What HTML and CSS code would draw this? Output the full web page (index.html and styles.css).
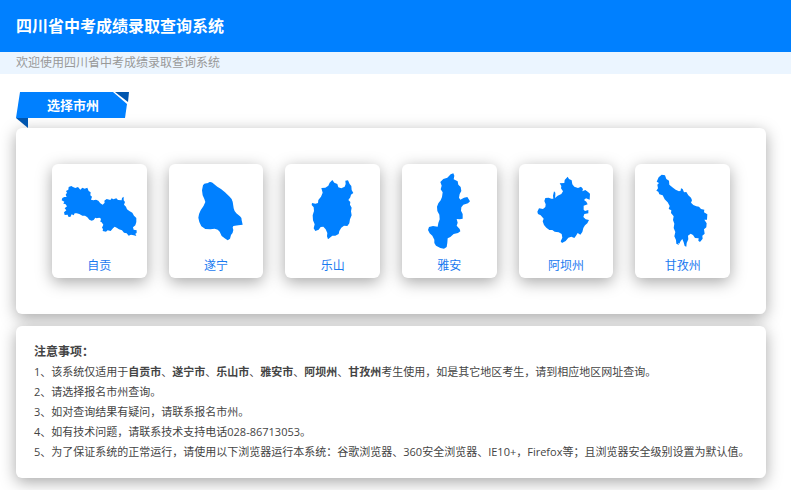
FILE: index.html
```
<!DOCTYPE html>
<html lang="zh-CN">
<head>
<meta charset="utf-8">
<meta name="viewport" content="width=device-width, initial-scale=1">
<title>四川省中考成绩录取查询系统</title>
<link rel="stylesheet" href="styles.css">
</head>
<body>
<header class="site-header">
  <h1 class="site-title">四川省中考成绩录取查询系统</h1>
</header>
<p class="welcome">欢迎使用四川省中考成绩录取查询系统</p>
<main class="content">
  <div class="ribbon">
    <svg class="ribbon-shape" viewBox="0 0 114 36" aria-hidden="true">
      <path fill="#0080ff" d="M4 0H97L111 12L109 26H0Z"/>
      <path fill="#0055ae" d="M99 0H113L112 10Z"/>
      <path fill="#0055ae" d="M0 26H12V36Z"/>
    </svg>
    <h2 class="ribbon-title">选择市州</h2>
  </div>
  <nav class="panel cities" aria-label="选择市州">
    <a class="city" href="#zigong">
      <svg class="city-map" viewBox="6 12 284 276" aria-hidden="true"><path d="M56 81L64 78L69 81L76 84L84 81L91 89L97 83L104 86L112 83L116 93L122 97L121 106L126 110L123 119L130 121L138 119L145 122L151 130L158 134L164 128L163 122L170 117L181 120L185 115L190 118L199 115L204 120L215 121L216 114L221 110L221 121L225 126L222 134L228 140L231 148L238 153L247 158L252 167L259 174L259 186L256 196L249 202L251 209L260 211L260 219L256 221L259 228L251 226L243 224L236 227L230 220L222 218L216 211L207 208L200 203L194 200L189 205L182 213L173 211L168 215L158 213L159 207L156 203L160 194L155 187L151 185L153 176L148 173L140 175L136 173L131 180L125 182L118 179L112 172L105 167L97 167L88 162L80 160L74 160L71 166L65 163L61 171L55 170L53 164L44 165L42 157L49 151L44 145L51 139L46 132L40 131L43 125L35 121L37 114L43 111L50 111L47 104L51 98L48 93L55 89Z"/></svg>
      <span class="city-name">自贡</span>
    </a>
    <a class="city" href="#suining">
      <svg class="city-map" viewBox="8 12 284 276" aria-hidden="true"><path d="M110 76Q113 69 123 70L130 66Q137 65 142 71L153 80L164 87L176 97L190 110Q198 117 199 125L202 145Q204 155 210 160L221 169Q227 174 226 181L229 194L216 196L201 198Q197 201 201 210Q200 220 194 225L191 236L184 241L175 235L166 228L160 215Q156 207 145 206L132 208L117 207L105 199Q98 188 96 173Q97 162 103 151Q113 138 117 126Q114 116 109 106L107 91Z"/></svg>
      <span class="city-name">遂宁</span>
    </a>
    <a class="city" href="#leshan">
      <svg class="city-map" viewBox="7 12 284 276" aria-hidden="true"><path d="M116 84L128 83L137 77L141 68L149 60L155 68L164 72L167 82L176 85L186 80L189 72L188 62L196 61L201 72L206 78L207 90L212 99L205 104L203 112L197 120L203 126L202 134L207 143L205 154L207 166L202 178L200 190L194 198L184 197L176 203L170 213L168 222L158 227L149 227L136 238L133 229L134 219L129 208L122 200L114 201L108 209L98 213L93 205L96 193L91 181L90 166L94 153L93 142L87 135L88 129L98 131L106 129L107 120L115 110L120 98Z"/></svg>
      <span class="city-name">乐山</span>
    </a>
    <a class="city" href="#yaan">
      <svg class="city-map" viewBox="6 12 284 276" aria-hidden="true"><path d="M121 66L130 57L142 53L152 43L160 40L163 47L161 58L173 64L175 74L182 81L184 93L179 102L177 113L181 119L192 113L202 111L210 124L204 130L190 134L184 142L183 152L188 162L188 176L179 178L170 177L173 188L170 197L179 207L181 214L174 219L161 222L151 231L143 235L142 248L140 261L132 266L121 264L108 257L103 249L103 239L97 227L89 220L84 210L87 201L99 198L113 200L115 189L119 178L118 164L112 153L111 140L115 130L122 121L126 111L128 97L122 88L125 77Z"/></svg>
      <span class="city-name">雅安</span>
    </a>
    <a class="city" href="#aba">
      <svg class="city-map" viewBox="8 12 284 276" aria-hidden="true"><path d="M130 70L144 69L145 60L154 50L158 57L166 61L168 73L174 80L185 84L194 80L200 87L198 94L207 90L216 97L221 101L220 119L209 115L203 120L210 125L214 133L202 137L202 149L206 153L216 150L216 160L204 162L201 171L208 178L218 180L213 190L206 196L201 204L198 216L192 224L184 219L179 227L174 234L165 230L156 233L148 243L137 249L133 244L138 233L136 222L127 217L115 215L108 210L99 210L90 203L83 195L79 184L82 176L73 166L65 162L63 155L68 145L80 147L87 141L88 133L84 123L87 114L97 113L105 116L111 116L110 107L113 94L117 98L117 106L116 114L124 107L135 102L140 94L134 85L135 78Z"/></svg>
      <span class="city-name">阿坝州</span>
    </a>
    <a class="city" href="#ganzi">
      <svg class="city-map" viewBox="7 12 284 276" aria-hidden="true"><path d="M78 52L87 44L97 46L101 57L109 62L110 74L119 82L129 89L139 94L144 92L145 85L150 87L154 97L161 96L167 106L175 113L178 121L175 128L182 135L191 139L199 140L205 147L215 149L214 157L224 163L223 179L215 179L222 190L221 202L214 208L216 221L209 227L210 236L202 246L197 242L198 235L187 234L181 225L174 221L166 227L167 238L162 249L161 260L156 258L153 247L149 237L144 243L140 251L136 248L139 255L131 251L130 240L125 229L128 216L123 204L125 191L121 180L123 169L115 159L116 151L108 147L111 138L105 127L96 118L90 106L80 103L77 95L71 92L76 85L74 74L79 69L72 65Z"/></svg>
      <span class="city-name">甘孜州</span>
    </a>
  </nav>
  <section class="panel notes">
    <h2 class="notes-title">注意事项：</h2>
    <p>1、该系统仅适用于<b>自贡市</b>、<b>遂宁市</b>、<b>乐山市</b>、<b>雅安市</b>、<b>阿坝州</b>、<b>甘孜州</b>考生使用，如是其它地区考生，请到相应地区网址查询。</p>
    <p>2、请选择报名市州查询。</p>
    <p>3、如对查询结果有疑问，请联系报名市州。</p>
    <p>4、如有技术问题，请联系技术支持电话028-86713053。</p>
    <p>5、为了保证系统的正常运行，请使用以下浏览器运行本系统：谷歌浏览器、360安全浏览器、IE10+，Firefox等；且浏览器安全级别设置为默认值。</p>
  </section>
</main>
</body>
</html>
```
FILE: styles.css
```
* {
  box-sizing: border-box;
}

body {
  margin: 0;
  background: #fff;
  color: #444;
  font-family: "Open Sans", "Noto Sans CJK SC", sans-serif;
  font-size: 12px;
}

h1,
h2,
p {
  margin: 0;
}

.site-header {
  padding: 14px 16px;
  background: #0080ff;
  color: #fff;
}

.site-title {
  font-size: 16px;
  line-height: 24px;
}

.welcome {
  padding: 0 16px;
  background: #ebf5ff;
  color: #999;
  line-height: 22px;
}

.content {
  padding: 18px 25px 12px 16px;
}

.ribbon {
  display: grid;
  width: 114px;
  height: 36px;
}

.ribbon-shape,
.ribbon-title {
  grid-area: 1 / 1;
}

.ribbon-shape {
  width: 100%;
}

.ribbon-title {
  z-index: 1;
  color: #fff;
  font-size: 13px;
  line-height: 26px;
  text-align: center;
}

.panel {
  border-radius: 6px;
  background: #fff;
  box-shadow: 0 4px 16px rgba(0, 0, 0, 0.35);
}

.cities {
  display: grid;
  grid-template-columns: repeat(6, 1fr);
  gap: 22px;
  padding: 36px;
}

.city {
  padding-bottom: 2px;
  border-radius: 6px;
  background: #fff;
  box-shadow: 0 4px 16px rgba(0, 0, 0, 0.35);
  color: #1a7af0;
  text-align: center;
  text-decoration: none;
}

.city-map {
  display: block;
  width: 100%;
  fill: #0080ff;
}

.city-name {
  display: block;
  line-height: 20px;
}

.notes {
  margin-top: 12px;
  padding: 16px 8px 16px 18px;
  font-size: 11px;
  line-height: 20px;
}

.notes-title {
  font-size: 12px;
}
```
